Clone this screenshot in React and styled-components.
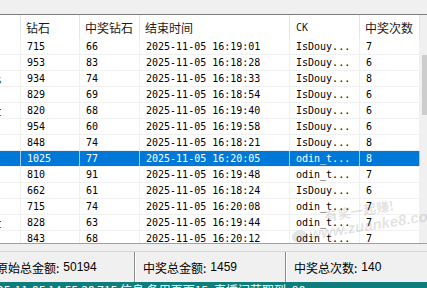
import React from "react";
import styled, { createGlobalStyle } from "styled-components";

const Global = createGlobalStyle`
  html, body { margin: 0; padding: 0; background: #f0f0f0; }
  body { width: 427px; height: 288px; overflow: hidden; }
  #root { width: 427px; height: 288px; }
`;

const CJK = `"Noto Sans CJK SC", "Microsoft YaHei", sans-serif`;
const MONO = `"DejaVu Sans Mono", "Noto Sans CJK SC", monospace`;
const COLS = "21px 59px 60px 150px 70px 60px";

const Page = styled.div`
  position: relative;
  width: 427px;
  height: 288px;
  overflow: hidden;
  display: flex;
  flex-direction: column;
  background: #f0f0f0;
`;

const TopStrip = styled.div`
  height: 14px;
  flex: none;
  background: #f0f0f0;
`;

const ListView = styled.div`
  height: 228px;
  flex: none;
  display: flex;
  border-top: 1px solid #7e7e7e;
  border-bottom: 1px solid #a0a0a0;
  background: #fff;
  overflow: hidden;
`;

const Table = styled.div`
  width: 420px;
  display: flex;
  flex-direction: column;
`;

const HeaderRow = styled.div`
  display: grid;
  grid-template-columns: ${COLS};
  height: 24px;
  flex: none;
  background: #fff;
`;

const HeaderCell = styled.div`
  display: flex;
  align-items: center;
  padding-left: ${(p) => (p.$mono ? 6 : 5)}px;
  border-right: 1px solid #e5e5e5;
  font-family: ${(p) => (p.$mono ? MONO : CJK)};
  font-size: ${(p) => (p.$mono ? 10 : 12)}px;
  color: #1a1a1a;
  white-space: nowrap;
  overflow: hidden;
`;

const Row = styled.div`
  display: grid;
  grid-template-columns: ${COLS};
  height: 16px;
  flex: none;
  box-sizing: border-box;
  border-bottom: 1px solid #f0f0f0;
  background: ${(p) => (p.$selected ? "#0078d7" : "#fff")};
  color: ${(p) => (p.$selected ? "#fff" : "#000")};
`;

const Cell = styled.div`
  display: flex;
  align-items: center;
  padding-left: 6px;
  border-right: 1px solid ${(p) => (p.$selected ? "#9ccbf0" : "#f0f0f0")};
  font-family: ${MONO};
  font-size: 10px;
  white-space: pre;
  overflow: hidden;
`;

const EdgeCell = styled.div`
  position: relative;
  overflow: hidden;
  border-right: 1px solid ${(p) => (p.$selected ? "#9ccbf0" : "#f0f0f0")};
`;

const Fragment = styled.span`
  position: absolute;
  right: 19px;
  top: -1px;
  font-family: ${CJK};
  font-size: 12px;
  white-space: nowrap;
`;

const ScrollTrack = styled.div`
  width: 7px;
  flex: none;
  background: #f0f0f0;
  display: flex;
  flex-direction: column;
  padding-top: 40px;
`;

const ScrollThumb = styled.div`
  height: 60px;
  margin-left: 2px;
  background: #cdcdcd;
`;

const Gap = styled.div`
  height: 7px;
  flex: none;
`;

const StatusBar = styled.div`
  height: 31px;
  flex: none;
  display: grid;
  grid-template-columns: 135px 151px 1fr;
  border-top: 1px solid #d6d6d6;
  box-sizing: border-box;
  background: #f0f0f0;
`;

const StatusPanel = styled.div`
  display: flex;
  align-items: center;
  padding-left: ${(p) => p.$pad}px;
  border-right: 1px solid ${(p) => (p.$last ? "transparent" : "#8c8c8c")};
  box-shadow: ${(p) => (p.$last ? "none" : "1px 0 0 #ffffff")};
  font-family: ${CJK};
  font-size: 12px;
  color: #000;
  white-space: nowrap;
  overflow: hidden;
`;

const CutLabel = styled.span`
  margin-left: -4px;
`;

const StatusValue = styled.span`
  font-family: "Liberation Sans", sans-serif;
  font-size: 12px;
  margin-left: 4px;
`;

const LogBar = styled.div`
  flex: 1;
  background: #0f7d7b;
  color: #f2ffff;
  font-family: ${CJK};
  font-size: 12px;
  line-height: 14px;
  padding-top: 1px;
  white-space: nowrap;
  overflow: hidden;
  margin-left: -3px;
`;

const Watermark = styled.div`
  position: absolute;
  left: 288px;
  top: 214px;
  transform: rotate(-9deg);
  transform-origin: left top;
  font-family: ${CJK};
  color: rgba(110, 110, 110, 0.2);
  font-weight: bold;
  pointer-events: none;
  line-height: 16px;
`;

const WmTitle = styled.div`
  font-size: 13px;
  padding-left: 36px;
`;

const WmUrl = styled.div`
  display: flex;
  align-items: center;
  gap: 2px;
  font-family: "Liberation Sans", sans-serif;
  font-size: 15px;
  font-style: italic;
`;

const WmDot = styled.span`
  width: 16px;
  height: 12px;
  border-radius: 50%;
  background: rgba(110, 110, 110, 0.18);
`;

const rows = [
  ["", "715", "66", "16:19:01", "IsDouy...", "7"],
  ["", "953", "83", "16:18:28", "IsDouy...", "6"],
  ["额s", "934", "74", "16:18:33", "IsDouy...", "8"],
  ["", "829", "69", "16:18:54", "IsDouy...", "6"],
  ["额t", "820", "68", "16:19:40", "IsDouy...", "6"],
  ["", "954", "60", "16:19:58", "IsDouy...", "6"],
  ["", "848", "74", "16:18:21", "IsDouy...", "8"],
  ["", "1025", "77", "16:20:05", "odin_t...", "8", true],
  ["", "810", "91", "16:19:48", "odin_t...", "7"],
  ["", "662", "61", "16:18:24", "IsDouy...", "6"],
  ["", "715", "74", "16:20:08", "odin_t...", "7"],
  ["额t", "828", "63", "16:19:44", "odin_t...", "7"],
  ["", "843", "68", "16:20:12", "odin_t...", "7"],
];

export default function App() {
  return (
    <Page>
      <Global />
      <TopStrip />
      <ListView>
        <Table>
          <HeaderRow>
            <HeaderCell />
            <HeaderCell>钻石</HeaderCell>
            <HeaderCell>中奖钻石</HeaderCell>
            <HeaderCell>结束时间</HeaderCell>
            <HeaderCell $mono>CK</HeaderCell>
            <HeaderCell>中奖次数</HeaderCell>
          </HeaderRow>
          {rows.map((r, i) => {
            const sel = !!r[6];
            return (
              <Row key={i} $selected={sel}>
                <EdgeCell $selected={sel}>
                  {r[0] ? <Fragment>{r[0]}</Fragment> : null}
                </EdgeCell>
                <Cell $selected={sel}>{r[1]}</Cell>
                <Cell $selected={sel}>{r[2]}</Cell>
                <Cell $selected={sel}>{"2025-11-05 " + r[3]}</Cell>
                <Cell $selected={sel}>{r[4]}</Cell>
                <Cell $selected={sel}>{r[5]}</Cell>
              </Row>
            );
          })}
        </Table>
        <ScrollTrack>
          <ScrollThumb />
        </ScrollTrack>
      </ListView>
      <Gap />
      <StatusBar>
        <StatusPanel $pad={0}>
          <CutLabel>原始总金额:</CutLabel>
          <StatusValue>50194</StatusValue>
        </StatusPanel>
        <StatusPanel $pad={8}>
          中奖总金额:<StatusValue>1459</StatusValue>
        </StatusPanel>
        <StatusPanel $pad={8} $last>
          中奖总次数:<StatusValue>140</StatusValue>
        </StatusPanel>
      </StatusBar>
      <LogBar>25-11-05 14:55:30 715 信息 备用页面15, 直播间获取到: 90</LogBar>
      <Watermark>
        <WmTitle>有奖一起赚!</WmTitle>
        <WmUrl>
          <WmDot />
          www.zuanke8.com
        </WmUrl>
      </Watermark>
    </Page>
  );
}
